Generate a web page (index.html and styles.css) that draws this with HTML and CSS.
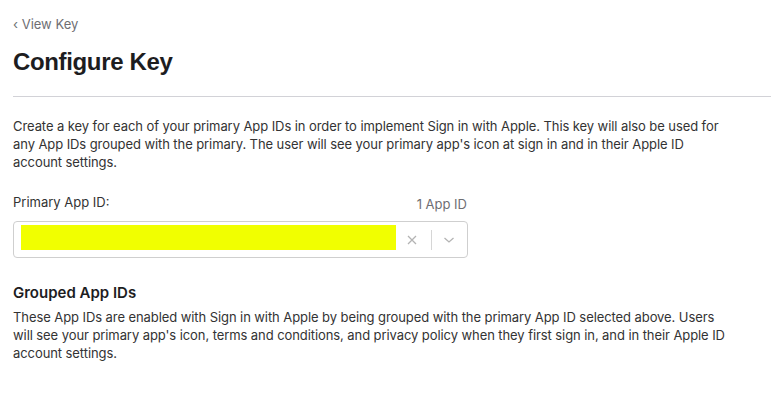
FILE: index.html
```html
<!DOCTYPE html>
<html>
<head>
<meta charset="utf-8">
<link rel="stylesheet" href="styles.css">
</head>
<body>
<div class="page">
  <a class="back" href="#"><span class="chev">‹</span> View Key</a>
  <h1 class="title">Configure Key</h1>
  <hr class="rule">
  <p class="desc">Create a key for each of your primary App IDs in order to implement Sign in with Apple. This key will also be used for any App IDs grouped with the primary. The user will see your primary app's icon at sign in and in their Apple ID account settings.</p>
  <div class="field">
    <div class="field-head">
      <span class="label">Primary App ID:</span>
      <span class="count">1 App ID</span>
    </div>
    <div class="select">
      <div class="value"><span class="redact"></span></div>
      <div class="controls">
        <svg class="icon-x" width="10" height="10" viewBox="0 0 10 10"><path d="M1 1L9 9M9 1L1 9" stroke="#b3b3b3" stroke-width="1.3" fill="none"/></svg>
        <span class="sep"></span>
        <svg class="icon-chev" width="12" height="8" viewBox="0 0 12 8"><path d="M1.5 2L6 6L10.5 2" stroke="#b3b3b3" stroke-width="1.3" fill="none"/></svg>
      </div>
    </div>
  </div>
  <h2 class="subtitle">Grouped App IDs</h2>
  <p class="desc desc2">These App IDs are enabled with Sign in with Apple by being grouped with the primary App ID selected above. Users will see your primary app's icon, terms and conditions, and privacy policy when they first sign in, and in their Apple ID account settings.</p>
</div>
</body>
</html>
```

FILE: styles.css
```css
html, body {
  margin: 0;
  padding: 0;
  background: #fff;
}
body {
  font-family: Inter, "Liberation Sans", Arial, sans-serif;
  color: #333;
}
.page {
  padding: 15px 0 0 13px;
}
.back {
  display: block;
  font-size: 13px;
  line-height: 18px;
  color: #6e6e73;
  text-decoration: none;
}
.title {
  margin: 14px 0 0 0;
  font-family: "Liberation Sans", Arial, sans-serif;
  font-size: 24px;
  line-height: 30px;
  font-weight: 700;
  letter-spacing: -0.35px;
  color: #1d1d1f;
}
.rule {
  margin: 19px 0 0 0;
  border: 0;
  border-top: 1px solid #d2d2d7;
  height: 0;
}
.desc {
  margin: 20px 0 0 0;
  font-size: 13px;
  line-height: 18px;
  letter-spacing: -0.08px;
  color: #333;
  max-width: 713px;
}
.field {
  width: 455px;
  margin-top: 22px;
}
.field-head {
  display: flex;
  justify-content: space-between;
  align-items: flex-end;
  font-size: 13px;
  line-height: 18px;
}
.label {
  color: #333;
}
.count {
  color: #6e6e73;
  padding-right: 1px;
  line-height: 14px;
}
.select {
  margin-top: 10px;
  height: 37px;
  box-sizing: border-box;
  border: 1px solid #cfcfcf;
  border-radius: 4px;
  display: flex;
  align-items: center;
}
.value {
  flex: 1;
  padding-left: 7px;
  align-self: flex-start;
  padding-top: 3px;
  display: flex;
}
.redact {
  display: block;
  width: 375px;
  height: 25px;
  background: #f1ff00;
}
.controls {
  display: flex;
  align-items: center;
  padding-right: 12px;
}
.icon-x {
  margin-right: 14px;
}
.sep {
  width: 1px;
  height: 20px;
  background: #d6d6d6;
  margin-right: 11px;
}
.subtitle {
  margin: 25px 0 0 0;
  font-size: 15px;
  line-height: 20px;
  font-weight: 600;
  color: #1d1d1f;
}
.desc2 {
  margin-top: 5px;
}
```
